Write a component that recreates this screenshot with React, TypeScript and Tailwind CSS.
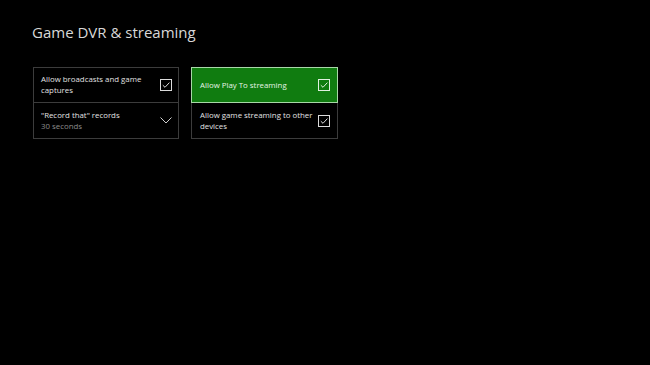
import React from 'react'

function CheckBox() {
  return (
    <svg width="12" height="12" viewBox="0 0 12 12" className="shrink-0">
      <rect x="0.5" y="0.5" width="11" height="11" fill="none" stroke="currentColor" strokeWidth="1" />
      <path d="M2.8 6.2 L5 8.3 L9.4 3.6" fill="none" stroke="currentColor" strokeWidth="1" />
    </svg>
  )
}

function Chevron() {
  return (
    <svg width="12" height="7" viewBox="0 0 12 7" className="shrink-0">
      <path d="M0.5 0.5 L6 6 L11.5 0.5" fill="none" stroke="currentColor" strokeWidth="1" />
    </svg>
  )
}

export default function App() {
  return (
    <div
      className="w-[650px] h-[365px] bg-black overflow-hidden pl-[32px] pt-[20px]"
      style={{ fontFamily: '"Open Sans", "Noto Sans", sans-serif' }}
    >
      {/* Page title */}
      <h1 className="text-[15px] leading-[24px] text-[#d8d8d8] font-normal">Game DVR &amp; streaming</h1>

      <div className="flex gap-[12px] mt-[23px] ml-[1px]">
        {/* Left group */}
        <div className="w-[146px] border border-[#3c3c3c]">
          <div className="h-[35px] flex items-center justify-between pl-[7px] pr-[6px] border-b border-[#3c3c3c]">
            <span className="text-[7.85px] leading-[11px] text-[#e2e2e2]">Allow broadcasts and game captures</span>
            <span className="text-[#dcdcdc] ml-2"><CheckBox /></span>
          </div>
          <div className="h-[35px] flex items-center justify-between pl-[7px] pr-[6px]">
            <div className="flex flex-col">
              <span className="text-[7.85px] leading-[11px] text-[#e2e2e2]">"Record that" records</span>
              <span className="text-[7.85px] leading-[11px] text-[#8c8c8c]">30 seconds</span>
            </div>
            <span className="text-[#cfcfcf]"><Chevron /></span>
          </div>
        </div>

        {/* Right group */}
        <div className="w-[147px]">
          <div className="h-[36px] flex items-center justify-between pl-[8px] pr-[7px] bg-[#107c10] border border-[#a8d8a8]">
            <span className="text-[7.85px] leading-[11px] text-[#e6f4e6]">Allow Play To streaming</span>
            <span className="text-[#dff0df]"><CheckBox /></span>
          </div>
          <div className="h-[36px] flex items-center justify-between pl-[8px] pr-[7px] border border-t-0 border-[#3c3c3c]">
            <span className="text-[7.85px] leading-[11px] text-[#e2e2e2]">Allow game streaming to other devices</span>
            <span className="text-[#dcdcdc] ml-1"><CheckBox /></span>
          </div>
        </div>
      </div>
    </div>
  )
}
